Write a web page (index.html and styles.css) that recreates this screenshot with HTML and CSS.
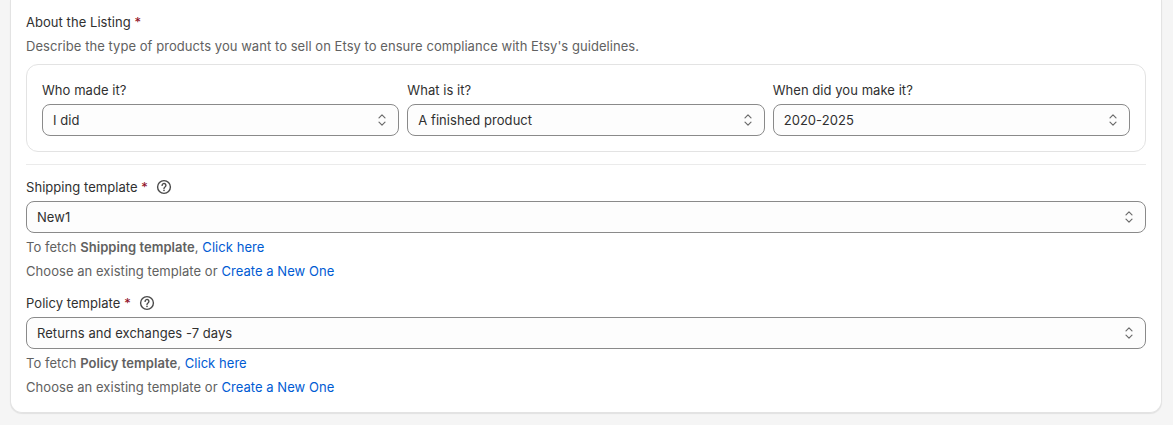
FILE: index.html
```html
<!DOCTYPE html>
<html lang="en">
<head>
<meta charset="utf-8">
<title>Etsy listing settings</title>
<link rel="stylesheet" href="styles.css">
</head>
<body>
<main class="card">
  <section class="field">
    <div class="label">About the Listing <span class="req">*</span></div>
    <p class="hint">Describe the type of products you want to sell on Etsy to ensure compliance with Etsy's guidelines.</p>
  </section>
  <div class="inset">
    <div class="col">
      <div class="label">Who made it?</div>
      <div class="select"><span>I did</span><svg class="chev" viewBox="0 0 10 16"><path d="M2 5.8l3-3 3 3M2 10.2l3 3 3-3"/></svg></div>
    </div>
    <div class="col">
      <div class="label">What is it?</div>
      <div class="select"><span>A finished product</span><svg class="chev" viewBox="0 0 10 16"><path d="M2 5.8l3-3 3 3M2 10.2l3 3 3-3"/></svg></div>
    </div>
    <div class="col">
      <div class="label">When did you make it?</div>
      <div class="select"><span>2020-2025</span><svg class="chev" viewBox="0 0 10 16"><path d="M2 5.8l3-3 3 3M2 10.2l3 3 3-3"/></svg></div>
    </div>
  </div>
  <hr class="divider">
  <section class="group">
    <div class="label-row">
      <span class="label">Shipping template <span class="req">*</span></span>
      <svg class="help" viewBox="0 0 16 16"><circle cx="8" cy="8" r="6.4"/><path d="M6.1 6.4a1.9 1.9 0 1 1 2.9 1.6c-.6.4-1 .7-1 1.4"/><circle class="dot" cx="8" cy="11.4" r=".8"/></svg>
    </div>
    <div class="select wide"><span>New1</span><svg class="chev" viewBox="0 0 10 16"><path d="M2 5.8l3-3 3 3M2 10.2l3 3 3-3"/></svg></div>
    <p class="hint">To fetch <b>Shipping template</b>, <a href="#">Click here</a></p>
    <p class="hint">Choose an existing template or <a href="#">Create a New One</a></p>
  </section>
  <section class="group">
    <div class="label-row">
      <span class="label">Policy template <span class="req">*</span></span>
      <svg class="help" viewBox="0 0 16 16"><circle cx="8" cy="8" r="6.4"/><path d="M6.1 6.4a1.9 1.9 0 1 1 2.9 1.6c-.6.4-1 .7-1 1.4"/><circle class="dot" cx="8" cy="11.4" r=".8"/></svg>
    </div>
    <div class="select wide"><span>Returns and exchanges -7 days</span><svg class="chev" viewBox="0 0 10 16"><path d="M2 5.8l3-3 3 3M2 10.2l3 3 3-3"/></svg></div>
    <p class="hint">To fetch <b>Policy template</b>, <a href="#">Click here</a></p>
    <p class="hint">Choose an existing template or <a href="#">Create a New One</a></p>
  </section>
</main>
</body>
</html>
```
FILE: styles.css
```css
* { box-sizing: border-box; }
html, body { margin: 0; height: 100%; }
body {
  background: #f5f5f5;
  font-family: Inter, "Liberation Sans", sans-serif;
  font-size: 13px;
  line-height: 20px;
  letter-spacing: .05px;
  color: #303030;
  overflow: hidden;
}
.card {
  margin: 0 11px 0 10px;
  padding: 12px 15px 15px;
  background: #fff;
  border: 1px solid #e3e3e3;
  border-top: 0;
  border-radius: 0 0 12px 12px;
  box-shadow: 0 1px 1px rgba(0,0,0,.08);
}
.label { color: #303030; }
.req { color: #8e0b21; }
.hint { margin: 4px 0 0; color: #616161; }
.hint b { font-weight: 600; }
.hint a { color: #005bd3; text-decoration: none; }
.inset {
  display: grid;
  grid-template-columns: repeat(3, 1fr);
  gap: 8px;
  margin-top: 8px;
  padding: 15px;
  border: 1px solid #e3e3e3;
  border-radius: 12px;
}
.col { min-width: 0; }
.select {
  display: flex;
  align-items: center;
  justify-content: space-between;
  height: 32px;
  margin-top: 4px;
  padding: 0 10px;
  background: #fdfdfd;
  border: 1px solid #8a8a8a;
  border-radius: 8px;
}
.chev {
  width: 10px;
  height: 16px;
  margin-right: 1px;
  fill: none;
  stroke: #6b6b6b;
  stroke-width: 1.2;
  stroke-linecap: round;
  stroke-linejoin: round;
}
.divider {
  height: 1px;
  margin: 12px 0;
  border: 0;
  background: #ebebeb;
}
.group + .group { margin-top: 12px; }
.label-row { display: flex; align-items: center; gap: 8px; }
.help {
  width: 16px;
  height: 16px;
  fill: none;
  stroke: #4a4a4a;
  stroke-width: 1.4;
  stroke-linecap: round;
}
.help .dot { fill: #4a4a4a; stroke: none; }
```
